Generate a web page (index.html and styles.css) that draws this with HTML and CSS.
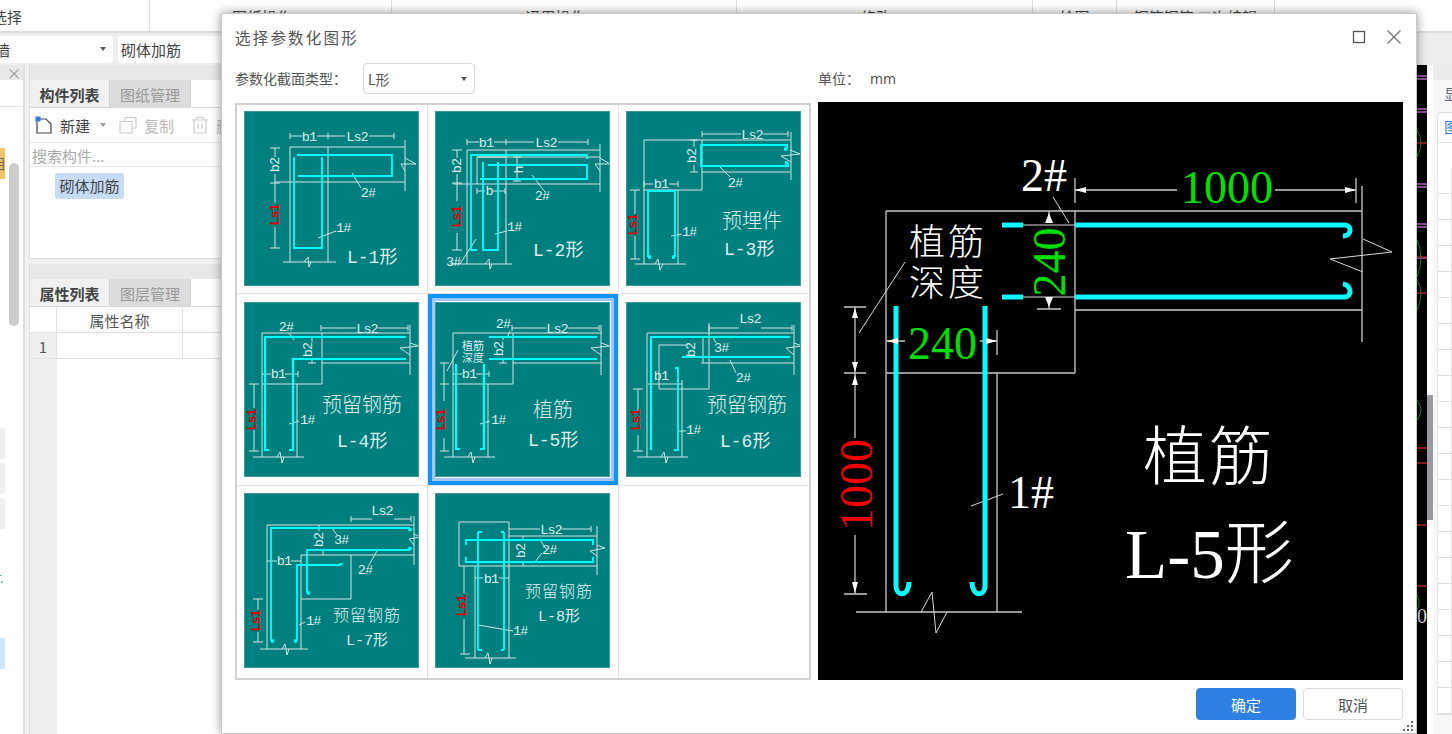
FILE: index.html
```html
<!DOCTYPE html>
<html lang="zh-CN">
<head>
<meta charset="utf-8">
<title>选择参数化图形</title>
<link rel="stylesheet" href="styles.css">
</head>
<body>
<div class="app">
  <div class="ribbon">
    <div class="rgroup g1">选择</div>
    <div class="rgroup g2">图纸操作</div>
    <div class="rgroup g3">通用操作</div>
    <div class="rgroup g4">修改</div>
    <div class="rgroup g5">绘图</div>
    <div class="rgroup g6">钢筋钢筋 二次编辑</div>
    <div class="rgroup g7"></div>
  </div>
  <div class="combos">
    <div class="combo c1"><span>砌体墙</span><i class="caret"></i></div>
    <div class="combo c2"><span>砌体加筋</span><i class="caret"></i></div>
  </div>
  <div class="work">
    <aside class="nav">
      <div class="nav-head"><span class="nav-x">×</span></div>
      <div class="nav-tool"></div>
      <div class="nav-list">
        <div class="nav-item orange">目</div>
        <div class="nav-thumb"></div>
        <div class="nav-item gray first"></div>
        <div class="nav-item gray"></div>
        <div class="nav-item gray"></div>
        <div class="nav-mark">T.</div>
        <div class="nav-item blue"></div>
      </div>
    </aside>
    <section class="mid">
      <div class="panel top">
        <div class="ptitle"></div>
        <div class="tabs"><div class="tab on">构件列表</div><div class="tab">图纸管理</div></div>
        <div class="tools">
          <div class="tool dark">
            <svg class="ticon" viewBox="0 0 18 18"><path class="ic-new" d="M2 3H11L16 8V17H2Z"/><rect class="ic-spark" x="0.500" y="0.500" width="5" height="5"/></svg>
            <span>新建</span><i class="caret light"></i>
          </div>
          <div class="tool">
            <svg class="ticon" viewBox="0 0 18 18"><path class="ic-dis" d="M6 5V1.500H17V12H13M1 5.500H13V17H1Z"/></svg>
            <span>复制</span>
          </div>
          <div class="tool">
            <svg class="ticon" viewBox="0 0 18 18"><path class="ic-dis" d="M1 4H17M6 4V1.500H12V4M3 4V17H15V4M7 8V13M11 8V13"/></svg>
            <span>删除</span>
          </div>
        </div>
        <div class="search">搜索构件...</div>
        <div class="tree"><span class="chip">砌体加筋</span></div>
      </div>
      <div class="panel bottom">
        <div class="ptitle"></div>
        <div class="tabs"><div class="tab on">属性列表</div><div class="tab">图层管理</div></div>
        <div class="thead"><div class="cnum"></div><div class="cname">属性名称</div><div class="cval"></div></div>
        <div class="trow"><div class="cnum">1</div><div class="cname"></div><div class="cval"></div></div>
        <div class="tfill"><div class="cnum"></div></div>
      </div>
    </section>
    <div class="canvas">
      <svg class="canvas-art" viewBox="0 0 10 669">
        <path class="cv-pink" d="M0 11H10M0 14H10M0 44H10M0 47H10M0 119H10M0 122H10M0 159H10M0 162H10M0 193H10"/>
        <path class="cv-red" d="M0 78H10M0 192H10M0 228H10M0 383H10M0 398H10M0 460H10M0 521H10"/>
        <path class="cv-green" d="M0 65Q8 78 0 92M0 175Q8 192 0 212M0 215Q8 228 0 245M0 335Q8 345 0 355M0 530Q4 538 0 545"/>
        <text class="cv-text" x="0" y="558">0</text>
      </svg>
    </div>
    <div class="vscroll"><div class="vthumb"></div></div>
    <aside class="side">
      <div class="side-head"></div>
      <div class="side-label">显</div>
      <div class="side-tab">图</div>
      <div class="side-grid">
        <div class="srow"></div><div class="srow"></div><div class="srow"></div><div class="srow"></div>
        <div class="srow"></div><div class="srow"></div><div class="srow"></div><div class="srow"></div>
        <div class="srow"></div><div class="srow"></div><div class="srow"></div><div class="srow"></div>
        <div class="srow"></div><div class="srow"></div><div class="srow"></div><div class="srow"></div>
        <div class="srow"></div><div class="srow"></div><div class="srow"></div><div class="srow"></div>
        <div class="srow"></div>
      </div>
    </aside>
  </div>
</div>

<div class="modal">
  <header class="mhead">
    <h1>选择参数化图形</h1>
    <div class="mbtns">
      <svg class="micon" viewBox="0 0 14 14"><rect class="ic-win" x="1.500" y="1.500" width="11" height="11"/></svg>
      <svg class="micon" viewBox="0 0 14 14"><path class="ic-close" d="M0.500 0.500L13.500 13.500M13.500 0.500L0.500 13.500"/></svg>
    </div>
  </header>
  <div class="mbody">
    <div class="mleft">
      <div class="form">
        <label>参数化截面类型：</label>
        <div class="select"><span>L形</span><i class="caret"></i></div>
      </div>
      <div class="shapes">
        <div class="cell r1">
          <svg class="thumb" viewBox="0 0 175 175">
            <path class="l" d="M46 36H161M46 36V151M84 36V151M39 151H92M31 71H161M161 29V80M46 22V28M46 25H58M73 25H101M84 22V28M125 25H150M150 22V28M26 37H36M31 37V46M31 63V92M26 72H36M31 116V137M26 137H36M60 151L64 146L65 156L67 151M161 47L172 53L157 53L161 60M108 62L117 77M74 127L92 120"/>
            <path class="c" d="M50 46V137H78V46M53 44H148V65H54"/>
            <text class="t m" x="65" y="30">b1</text><text class="t m" x="113" y="30">Ls2</text>
            <text class="t m" transform="rotate(-90 35 54)" x="35" y="54">b2</text>
            <text class="t m red" transform="rotate(-90 35 104)" x="35" y="104">Ls1</text>
            <text class="t m" x="124" y="86">2#</text><text class="t" x="92" y="121">1#</text>
            <text class="big" x="103" y="152">L-1形</text>
          </svg>
        </div>
        <div class="cell r1">
          <svg class="thumb" viewBox="0 0 175 175">
            <path class="l" d="M32 39H165M32 39V153M71 39V153M15 153H77M18 73H165M165 33V81M32 28V34M32 31H44M59 31H99M71 28V34M123 31H153M153 28V34M17 39H27M22 39V47M22 63V90M17 72H27M22 122V139M17 139H27M42 46H71M42 46V73M42 46H165M82 46V70M78 46H86M78 70H86M42 77V83M42 80H50M58 80H70M70 77V83M50 153L54 148L55 158L57 153M165 47L175 53L160 53L165 60M97 64L110 81M60 123L72 120M41 128L25 153"/>
            <path class="c" d="M152 48V44H36V139H42M53 54H152V68H45M48 51V139H63V51"/>
            <text class="t m" x="51" y="36">b1</text><text class="t m" x="111" y="36">Ls2</text>
            <text class="t m" transform="rotate(-90 26 55)" x="26" y="55">b2</text>
            <text class="t m red" transform="rotate(-90 26 106)" x="26" y="106">Ls1</text>
            <text class="t m" transform="rotate(-90 88 59)" x="88" y="59">h</text>
            <text class="t m" x="54" y="84">b</text>
            <text class="t m" x="107" y="89">2#</text><text class="t" x="72" y="120">1#</text><text class="t" x="11" y="155">3#</text>
            <text class="big" x="98" y="145">L-2形</text>
          </svg>
        </div>
        <div class="cell r1">
          <svg class="thumb" viewBox="0 0 175 175">
            <path class="l" d="M18 29H164M18 29V153M18 79H76M76 29V79M52 79V153M9 153H60M76 61H164M165 21V69M76 20V26M76 23H115M137 23H162M162 20V26M64 29H72M68 29V36M68 54V61M64 61H72M18 70V76M18 73H27M43 73H52M52 70V76M4 79H14M9 79V103M9 125V148M4 148H14M29 153L32 148L34 159L37 153M164 39L174 43L155 45L165 51M94 56L104 66M45 125L56 123"/>
            <path class="c" d="M22 146V80H49V146"/>
            <path class="c" d="M161 38V34H75V55H162V52"/>
            <path class="d" d="M22 146H25M49 146H46M161 38H158M162 52H159"/>
            <text class="t m" x="126" y="28">Ls2</text>
            <text class="t m" x="35" y="77">b1</text>
            <text class="t m" transform="rotate(-90 70 45)" x="70" y="45">b2</text>
            <text class="t m red" transform="rotate(-90 11 114)" x="11" y="114">Ls1</text>
            <text class="t m" x="109" y="76">2#</text><text class="t" x="56" y="125">1#</text>
            <text class="cn m" x="126" y="117">预埋件</text>
            <text class="big" x="98" y="144">L-3形</text>
          </svg>
        </div>
        <div class="cell r2">
          <svg class="thumb" viewBox="0 0 175 175">
            <path class="l" d="M18 31H166M18 31V155M18 82H78M78 31V82M53 82V155M9 155H60M78 61H166M166 23V73M77 23V29M77 26H112M134 26H164M164 23V29M64 35H72M68 35V40M68 56V61M64 61H72M18 72H27M41 72H54M54 69V75M5 82H15M10 82V106M10 128V149M5 149H15M45 31L50 38M33 155L36 150L38 161L40 155M166 41L175 44L156 46L166 53M45 122L55 119"/>
            <path class="c t2" d="M162 35H21V148H25"/>
            <path class="c t2" d="M162 57H49V148H45"/>
            <text class="t m" x="123" y="31">Ls2</text>
            <text class="t m" x="42" y="29">2#</text>
            <text class="t m" x="34" y="76">b1</text>
            <text class="t m" transform="rotate(-90 68 48)" x="68" y="48">b2</text>
            <text class="t m red" transform="rotate(-90 12 118)" x="12" y="118">Ls1</text>
            <text class="t" x="56" y="122">1#</text>
            <text class="cn m" x="118" y="110">预留钢筋</text>
            <text class="big" x="93" y="145">L-4形</text>
          </svg>
        </div>
        <div class="cell sel r2">
          <svg class="thumb" viewBox="0 0 175 175">
            <path class="l" d="M18 31H166M18 31V155M18 82H78M78 31V82M53 82V155M9 155H60M78 61H166M166 23V73M77 23V29M77 26H111M133 26H164M164 23V29M64 35H72M68 35V38M68 56V61M64 61H72M18 72H27M41 72H54M54 69V75M5 61H14M9 61V99M5 82H14M9 136V149M5 149H14M75 29L72 36M23 48L12 69M33 155L36 150L38 161L40 155M166 41L175 44L156 46L166 53M45 122L55 119"/>
            <path class="c t2" d="M54 35H162M54 57H162M21 62V147H25M49 62V147H45"/>
            <text class="t m" x="122" y="31">Ls2</text>
            <text class="t m" x="68" y="26">2#</text>
            <text class="t m" x="34" y="76">b1</text>
            <text class="t m" transform="rotate(-90 68 47)" x="68" y="47">b2</text>
            <text class="t m red" transform="rotate(-90 10 118)" x="10" y="118">Ls1</text>
            <text class="t" x="56" y="122">1#</text>
            <text class="tiny m" x="38" y="48">植筋</text><text class="tiny m" x="38" y="60">深度</text>
            <text class="cn m" x="118" y="115">植筋</text>
            <text class="big" x="93" y="144">L-5形</text>
          </svg>
        </div>
        <div class="cell r2">
          <svg class="thumb" viewBox="0 0 175 175">
            <path class="l" d="M21 31H168M21 31V155M22 82H56M33 87H83M83 21V87M33 43V87M33 43H60M56 78V155M11 155H62M75 61H168M168 23V73M83 23V29M83 26H113M135 26H166M166 23V29M77 35V61M7 87H17M12 87V111M12 133V149M7 149H17M87 35L90 41M104 58L110 71M53 129H60M35 155L38 150L40 161L42 155M168 41L176 44L160 46L168 53"/>
            <path class="c t2" d="M164 35H25V148"/>
            <path class="c t2" d="M56 55H164"/>
            <path class="c" d="M49 66H52V148H48"/>
            <text class="t m" x="124" y="21">Ls2</text>
            <text class="t m" x="35" y="78">b1</text>
            <text class="t m" transform="rotate(-90 69 48)" x="69" y="48">b2</text>
            <text class="t m red" transform="rotate(-90 14 118)" x="14" y="118">Ls1</text>
            <text class="t" x="88" y="50">3#</text>
            <text class="t m" x="117" y="80">2#</text>
            <text class="t" x="60" y="132">1#</text>
            <text class="cn m" x="121" y="110">预留钢筋</text>
            <text class="big" x="94" y="145">L-6形</text>
          </svg>
        </div>
        <div class="cell">
          <svg class="thumb" viewBox="0 0 175 175">
            <path class="l" d="M23 32H170M23 32V156M57 62H170M57 62V156M107 62V106M57 106H107M170 23V72M16 156H64M107 23V29M107 26H128M150 26H167M167 23V29M75 32V38M79 56V62M23 68H33M47 68H57M9 106H19M14 106V117M14 139V149M9 149H19M88 35L93 42M133 58L125 72M55 132L61 129M38 156L41 151L43 162L45 156M170 41L176 44L165 46L170 52"/>
            <path class="c" d="M166 35H27V148"/>
            <path class="c" d="M166 57H63V100"/>
            <path class="c" d="M97 72H53V148"/>
            <path class="d" d="M27 148H30M53 148H50M63 100H66M97 72V70M166 35V38M166 57V54"/>
            <text class="t m" x="138" y="22">Ls2</text>
            <text class="t m" x="40" y="72">b1</text>
            <text class="t m" transform="rotate(-90 79 47)" x="79" y="47">b2</text>
            <text class="t m red" transform="rotate(-90 16 128)" x="16" y="128">Ls1</text>
            <text class="t" x="90" y="51">3#</text>
            <text class="t m" x="121" y="81">2#</text>
            <text class="t" x="62" y="132">1#</text>
            <text class="cn s m" x="123" y="128">预留钢筋</text>
            <text class="big s" x="102" y="152">L-7形</text>
          </svg>
        </div>
        <div class="cell">
          <svg class="thumb" viewBox="0 0 175 175">
            <path class="l" d="M24 29H74V73H24ZM74 43H162M74 73H162M162 33V82M40 73V165M74 73V165M30 165H81M74 36H105M127 36H156M156 33V39M88 43V48M88 68V73M40 85H48M64 85H74M29 73V100M29 126V161M25 161H35M105 47L112 57M100 69L107 60M43 132L78 138M50 165L53 160L55 171L57 165M162 52L170 55L155 58L162 63"/>
            <path class="c" d="M31 52V47H158V52M31 64V69H158V64M43 39V157M69 39V157"/>
            <path class="c" d="M43 39H47M69 39H66M43 157H47M69 157H66"/>
            <text class="t m" x="116" y="41">Ls2</text>
            <text class="t m" x="56" y="90">b1</text>
            <text class="t m" transform="rotate(-90 90 58)" x="90" y="58">b2</text>
            <text class="t m red" transform="rotate(-90 31 113)" x="31" y="113">Ls1</text>
            <text class="t" x="107" y="61">2#</text>
            <text class="t" x="78" y="142">1#</text>
            <text class="cn s m" x="124" y="104">预留钢筋</text>
            <text class="big s" x="103" y="128">L-8形</text>
          </svg>
        </div>
        <div class="cell"></div>
      </div>
    </div>
    <div class="mright">
      <div class="unit"><span>单位：</span><span>mm</span></div>
      <svg class="preview" viewBox="818 102 585 578">
        <path class="pl" d="M886 211H1362M886 211V612M1075 211V373M886 373H1075M997 373V612M1075 310H1362M1362 186V342M856 612H1022M1075 178V203M1356 178V203M1075 190H1177M1275 190H1356M1037 309H1061M1049 211V223M1049 298V309M844 307H866M844 373H866M844 594H867M855 307V438M855 535V594M886 341H905M980 341H997M997 330V355"/>
        <path class="pt" d="M921 612L932 592L936 633L947 612M1363 239L1392 252L1330 259L1363 272M1053 197L1069 223M905 262L859 333M971 506L1003 494M1023 225H1075M1023 297H1075"/>
        <path class="pc" d="M1002 225H1023M1075 225H1345C1352 225 1352 236 1343 236M1002 297H1023M1075 297H1345C1352 297 1352 285 1343 284M896 306V586C896 597 909 597 909 582M985 306V586C985 597 972 597 972 582"/>
        <path class="pa" d="M1075 190L1086 187V193ZM1356 190L1345 187V193ZM1049 213L1045 223H1053ZM1049 307L1045 297H1053ZM855 308L852 318H858ZM855 372L852 362H858ZM855 375L852 385H858ZM855 593L852 582H858ZM887 341L898 338V344ZM997 341L986 338V344Z"/>
        <text class="pw d45" x="1021" y="191">2#</text>
        <text class="pg d45" x="1181" y="203">1000</text>
        <text class="pg d45" transform="rotate(-90 1065 262)" x="1065" y="262" text-anchor="middle">240</text>
        <text class="pg d45" x="908" y="359">240</text>
        <text class="pr d45" transform="rotate(-90 872 485)" x="872" y="485" text-anchor="middle">1000</text>
        <text class="pw d45" x="1008" y="508">1#</text>
        <text class="pw c36" x="909" y="255" textLength="75">植筋</text>
        <text class="pw c36" x="909" y="296" textLength="75">深度</text>
        <text class="pw c64" x="1143" y="479" textLength="130">植筋</text>
        <text class="pw d71" x="1125" y="578">L-5形</text>
      </svg>
    </div>
  </div>
  <footer class="mfoot">
    <button class="btn primary">确定</button>
    <button class="btn">取消</button>
  </footer>
  <svg class="grip" viewBox="0 0 10 10"><path class="ic-grip" d="M8 0H10V2H8ZM4 4H6V6H4ZM8 4H10V6H8ZM0 8H2V10H0ZM4 8H6V10H4ZM8 8H10V10H8Z"/></svg>
</div>
</body>
</html>
```
FILE: styles.css
```css
* { box-sizing: border-box; }
html, body { margin: 0; padding: 0; }
body {
  width: 1452px; height: 734px; overflow: hidden; position: relative;
  background: #f2f2f2;
  font-family: "Noto Sans CJK SC", "Noto Sans", sans-serif;
  font-size: 15px; color: #555;
}
.app { width: 1452px; height: 734px; display: flex; flex-direction: column; overflow: hidden; }

/* ribbon */
.ribbon { height: 33px; display: flex; background: #fff; border-bottom: 2px solid #dcdcdc; flex: none; margin-left: -135px; }
.rgroup { flex: none; line-height: 34px; text-align: center; font-size: 15px; padding-right: 17px; border-right: 1px solid #ddd; color: #444; white-space: nowrap; overflow: hidden; }
.g1 { width: 285px; padding-right: 0; }
.g2 { width: 242px; } .g3 { width: 345px; } .g4 { width: 296px; }
.g5 { width: 84px; padding-right: 0; } .g6 { width: 158px; padding-right: 0; } .g7 { flex: 1; border-right: 0; }

.combos { height: 32px; flex: none; background: #eee; display: flex; gap: 5px; align-items: center; margin-left: -38px; }
.combo { height: 27px; background: #fff; border-radius: 4px; display: flex; align-items: center; justify-content: space-between; padding: 0 7px 0 3px; color: #444; }
.c1 { width: 151px; } .c2 { width: 200px; }
.caret { display: block; width: 0; height: 0; border-left: 3px solid transparent; border-right: 3px solid transparent; border-top: 4px solid #555; }
.caret.light { border-top-color: #999; }

/* work area */
.work { flex: 1; display: flex; min-height: 0; background: #f2f2f2; }
.nav { width: 25px; flex: none; background: #fff; border-right: 2px solid #dedede; overflow: hidden; position: relative; }
.nav-head { height: 15px; background: #e8e8e8; }
.nav-x { display: block; font-size: 15px; line-height: 15px; width: 28px; text-align: center; color: #999; }
.nav-tool { height: 27px; border-bottom: 1px solid #e2e2e2; }
.nav-list { position: relative; }
.nav-item { width: 5px; height: 31px; overflow: hidden; }
.orange { background: #f0c36c; margin-top: 41px; font-size: 14px; line-height: 30px; text-indent: -8px; color: #765; }
.gray { background: #f0f0f0; margin-top: 4px; }
.gray.first { margin-top: 249px; }
.blue { background: #cfe5ff; margin-top: 47px; }
.nav-mark { height: 25px; margin-top: 37px; font-size: 11px; line-height: 25px; width: 6px; overflow: hidden; text-indent: -5px; color: #258; }
.nav-thumb { position: absolute; left: 9px; top: 15px; width: 10px; height: 163px; background: #ccc; border-radius: 5px; }

.mid { width: 300px; flex: none; margin-left: 4px; display: flex; flex-direction: column; }
.panel { background: #fff; display: flex; flex-direction: column; }
.panel.top { height: 194px; border-bottom: 1px solid #ddd; border-left: 1px solid #ddd; }
.panel.bottom { flex: 1; margin-top: 5px; border-left: 1px solid #ddd; min-height: 0; }
.ptitle { height: 15px; background: #e8e8e8; flex: none; }
.tabs { height: 28px; display: flex; flex: none; border-bottom: 1px solid #d8d8d8; }
.tab { width: 81px; background: #dcdcdc; color: #999; line-height: 29px; text-align: center; font-size: 15px; border-right: 1px solid #d0d0d0; }
.tab.on { width: 80px; background: #f1f1f1; color: #444; font-weight: 700; }
.tools { height: 35px; flex: none; display: flex; align-items: center; border-bottom: 1px solid #e6e6e6; padding-left: 5px; gap: 17px; color: #bbb; }
.tool { display: flex; align-items: center; gap: 7px; white-space: nowrap; }
.tool.dark { color: #444; }
.tool.dark .caret { margin: 0 -4px 0 3px; }
.ticon { width: 18px; height: 18px; flex: none; }
.ic-new { fill: #fff; stroke: #445; stroke-width: 1.200; }
.ic-spark { fill: #2f7fe0; }
.ic-dis { fill: #fff; stroke: #ccc; stroke-width: 1.200; }
.search { height: 24px; flex: none; line-height: 26px; padding-left: 2px; color: #aaa; border-bottom: 1px solid #e6e6e6; }
.tree { padding: 6px 0 0 25px; }
.chip { display: block; width: 69px; height: 26px; line-height: 26px; text-align: center; background: #c6dcf5; border-radius: 3px; color: #444; }
.thead, .trow { height: 26px; flex: none; display: flex; border-bottom: 1px solid #e2e2e2; }
.cnum { width: 27px; flex: none; border-right: 1px solid #e2e2e2; }
.trow .cnum { background: #efefef; text-align: center; line-height: 27px; }
.cname { width: 126px; flex: none; text-align: center; line-height: 27px; border-right: 1px solid #e2e2e2; color: #555; }
.cval { flex: 1; }
.tfill { flex: 1; }
.tfill .cnum { height: 100%; background: #efefef; border-right: 0; }

.canvas { flex: 1; background: #000; display: flex; justify-content: flex-end; }
.canvas-art { width: 10px; height: 669px; display: block; flex: none; }
.cv-pink { stroke: #b56ac4; stroke-width: 1.500; fill: none; }
.cv-red { stroke: #b02030; stroke-width: 1.500; fill: none; }
.cv-green { stroke: #1f8a1f; stroke-width: 1; fill: none; }
.cv-text { fill: #ddd; font-family: "Liberation Serif", serif; font-size: 20px; }
.vscroll { width: 6px; flex: none; background: #fff; position: relative; }
.vthumb { position: absolute; left: 0; top: 330px; width: 6px; height: 125px; background: #9a9aa0; }
.side { width: 19px; flex: none; background: #f7f7f7; overflow: hidden; }
.side-head { height: 15px; background: #ececec; }
.side-label { height: 32px; line-height: 28px; padding-left: 11px; color: #667; white-space: nowrap; overflow: hidden; }
.side-tab { margin-left: 4px; width: 30px; height: 30px; background: #fff; border: 1px solid #ddd; border-bottom: 0; border-radius: 4px 0 0 0; color: #2f7fe0; line-height: 28px; padding-left: 6px; }
.side-grid { margin-left: 4px; border: 1px solid #e4e4e4; border-right: 0; background: #fff; padding-top: 25px; }
.srow { height: 26px; border-bottom: 1px solid #e0e0e0; background: linear-gradient(to right, #fff 13px, #e0e0e0 13px, #e0e0e0 14px, #fff 14px); }

/* dialog: floats over the app */
.modal {
  position: absolute; left: 221px; top: 13px; width: 1196px; height: 721px;
  background: #fff; border: 1px solid #c8c8c8; padding: 0 13px;
  box-shadow: 0 0 10px rgba(0, 0, 0, .42);
}
.mhead { height: 46px; display: flex; align-items: center; justify-content: space-between; }
.mhead h1 { margin: 0; font-size: 15.500px; letter-spacing: 2.200px; font-weight: 400; color: #555; }
.mbtns { display: flex; gap: 21px; margin-right: 2px; align-items: center; }
.micon { width: 14px; height: 14px; display: block; }
.ic-win { fill: none; stroke: #555; stroke-width: 1.300; }
.ic-close { fill: none; stroke: #777; stroke-width: 1.400; }
.mbody { display: grid; grid-template-columns: 576px 585px; column-gap: 7px; }
.form { height: 43px; display: flex; align-items: flex-start; padding-top: 3px; }
.form label { width: 128px; line-height: 31px; color: #555; font-size: 14px; white-space: nowrap; }
.select { width: 112px; height: 31px; border: 1px solid #d8d8d8; border-radius: 4px; display: flex; align-items: center; justify-content: space-between; padding: 0 7px 0 4px; color: #555; font-size: 14px; }
.shapes {
  width: 576px; height: 577px; border: 2px solid #d2d2d2; background: #e2e2e2;
  display: grid; grid-template-columns: repeat(3, 190px); grid-template-rows: 188px 191px 192px; gap: 1px;
}
.cell { background: #fff; padding: 7px 0 0 7px; }
.cell.r1 { padding-top: 6px; }
.cell.r2 { padding-top: 8px; }
.cell.sel { box-shadow: inset 0 0 0 4px #0f94ff, inset 0 0 0 7px #9fc6ff; }
.thumb { display: block; width: 175px; height: 175px; background: #007f7f; outline: 1px solid #3d9b9b; outline-offset: -1px; }
.l { fill: none; stroke: #d4e4e4; stroke-width: 1; }
.c { fill: none; stroke: #00ffff; stroke-width: 1.800; }
.c.t2 { stroke-width: 2.200; }
.d { fill: none; stroke: #00ffff; stroke-width: 3.500; }
.t { font-family: "Liberation Mono", monospace; font-size: 13.500px; letter-spacing: -0.900px; fill: #dfeeee; }
.m { text-anchor: middle; }
.t.red { fill: #e00000; font-weight: 700; }
.big { font-family: "Liberation Mono", "Noto Sans CJK SC", monospace; font-size: 18px; fill: #dfeeee; }
.big.s { font-size: 15px; }
.cn { font-family: "Noto Sans CJK SC", sans-serif; font-size: 20px; font-weight: 300; fill: #dfeeee; }
.cn.s { font-size: 16px; letter-spacing: 1px; }
.tiny { font-family: "Noto Sans CJK SC", sans-serif; font-size: 11px; fill: #dfeeee; }
.unit { height: 42px; padding-bottom: 6px; display: flex; align-items: center; gap: 1px; color: #555; font-size: 14px; }
.unit span + span { font-family: "Noto Sans", sans-serif; margin-left: 9px; }
.preview { display: block; width: 585px; height: 578px; background: #000; }
.pl { fill: none; stroke: #c8c8c8; stroke-width: 1.300; }
.pt { fill: none; stroke: #d8d8d8; stroke-width: 1; }
.pc { fill: none; stroke: #00ffff; stroke-width: 5; }
.pa { fill: #fff; }
.pw { fill: #fff; }
.pg { fill: #00e000; }
.pr { fill: #f00000; }
.d45 { font-family: "Liberation Serif", serif; font-size: 46px; }
.c36 { font-family: "Noto Sans CJK SC", sans-serif; font-size: 36px; font-weight: 300; }
.c64 { font-family: "Noto Sans CJK SC", sans-serif; font-size: 64px; font-weight: 300; }
.d71 { font-family: "Liberation Serif", "Noto Sans CJK SC", serif; font-size: 69px; font-weight: 300; }
.mfoot { display: flex; justify-content: flex-end; gap: 7px; margin-top: 8px; }
.btn { width: 100px; height: 32px; padding: 0; font: 15px "Noto Sans CJK SC", sans-serif; background: #fff; color: #555; border: 1px solid #dcdcdc; border-radius: 4px; }
.btn.primary { background: #2d7fe3; border-color: #2d7fe3; color: #fff; }
.grip { position: absolute; right: 3px; bottom: 2px; width: 10px; height: 10px; }
.ic-grip { fill: #667; }
```
